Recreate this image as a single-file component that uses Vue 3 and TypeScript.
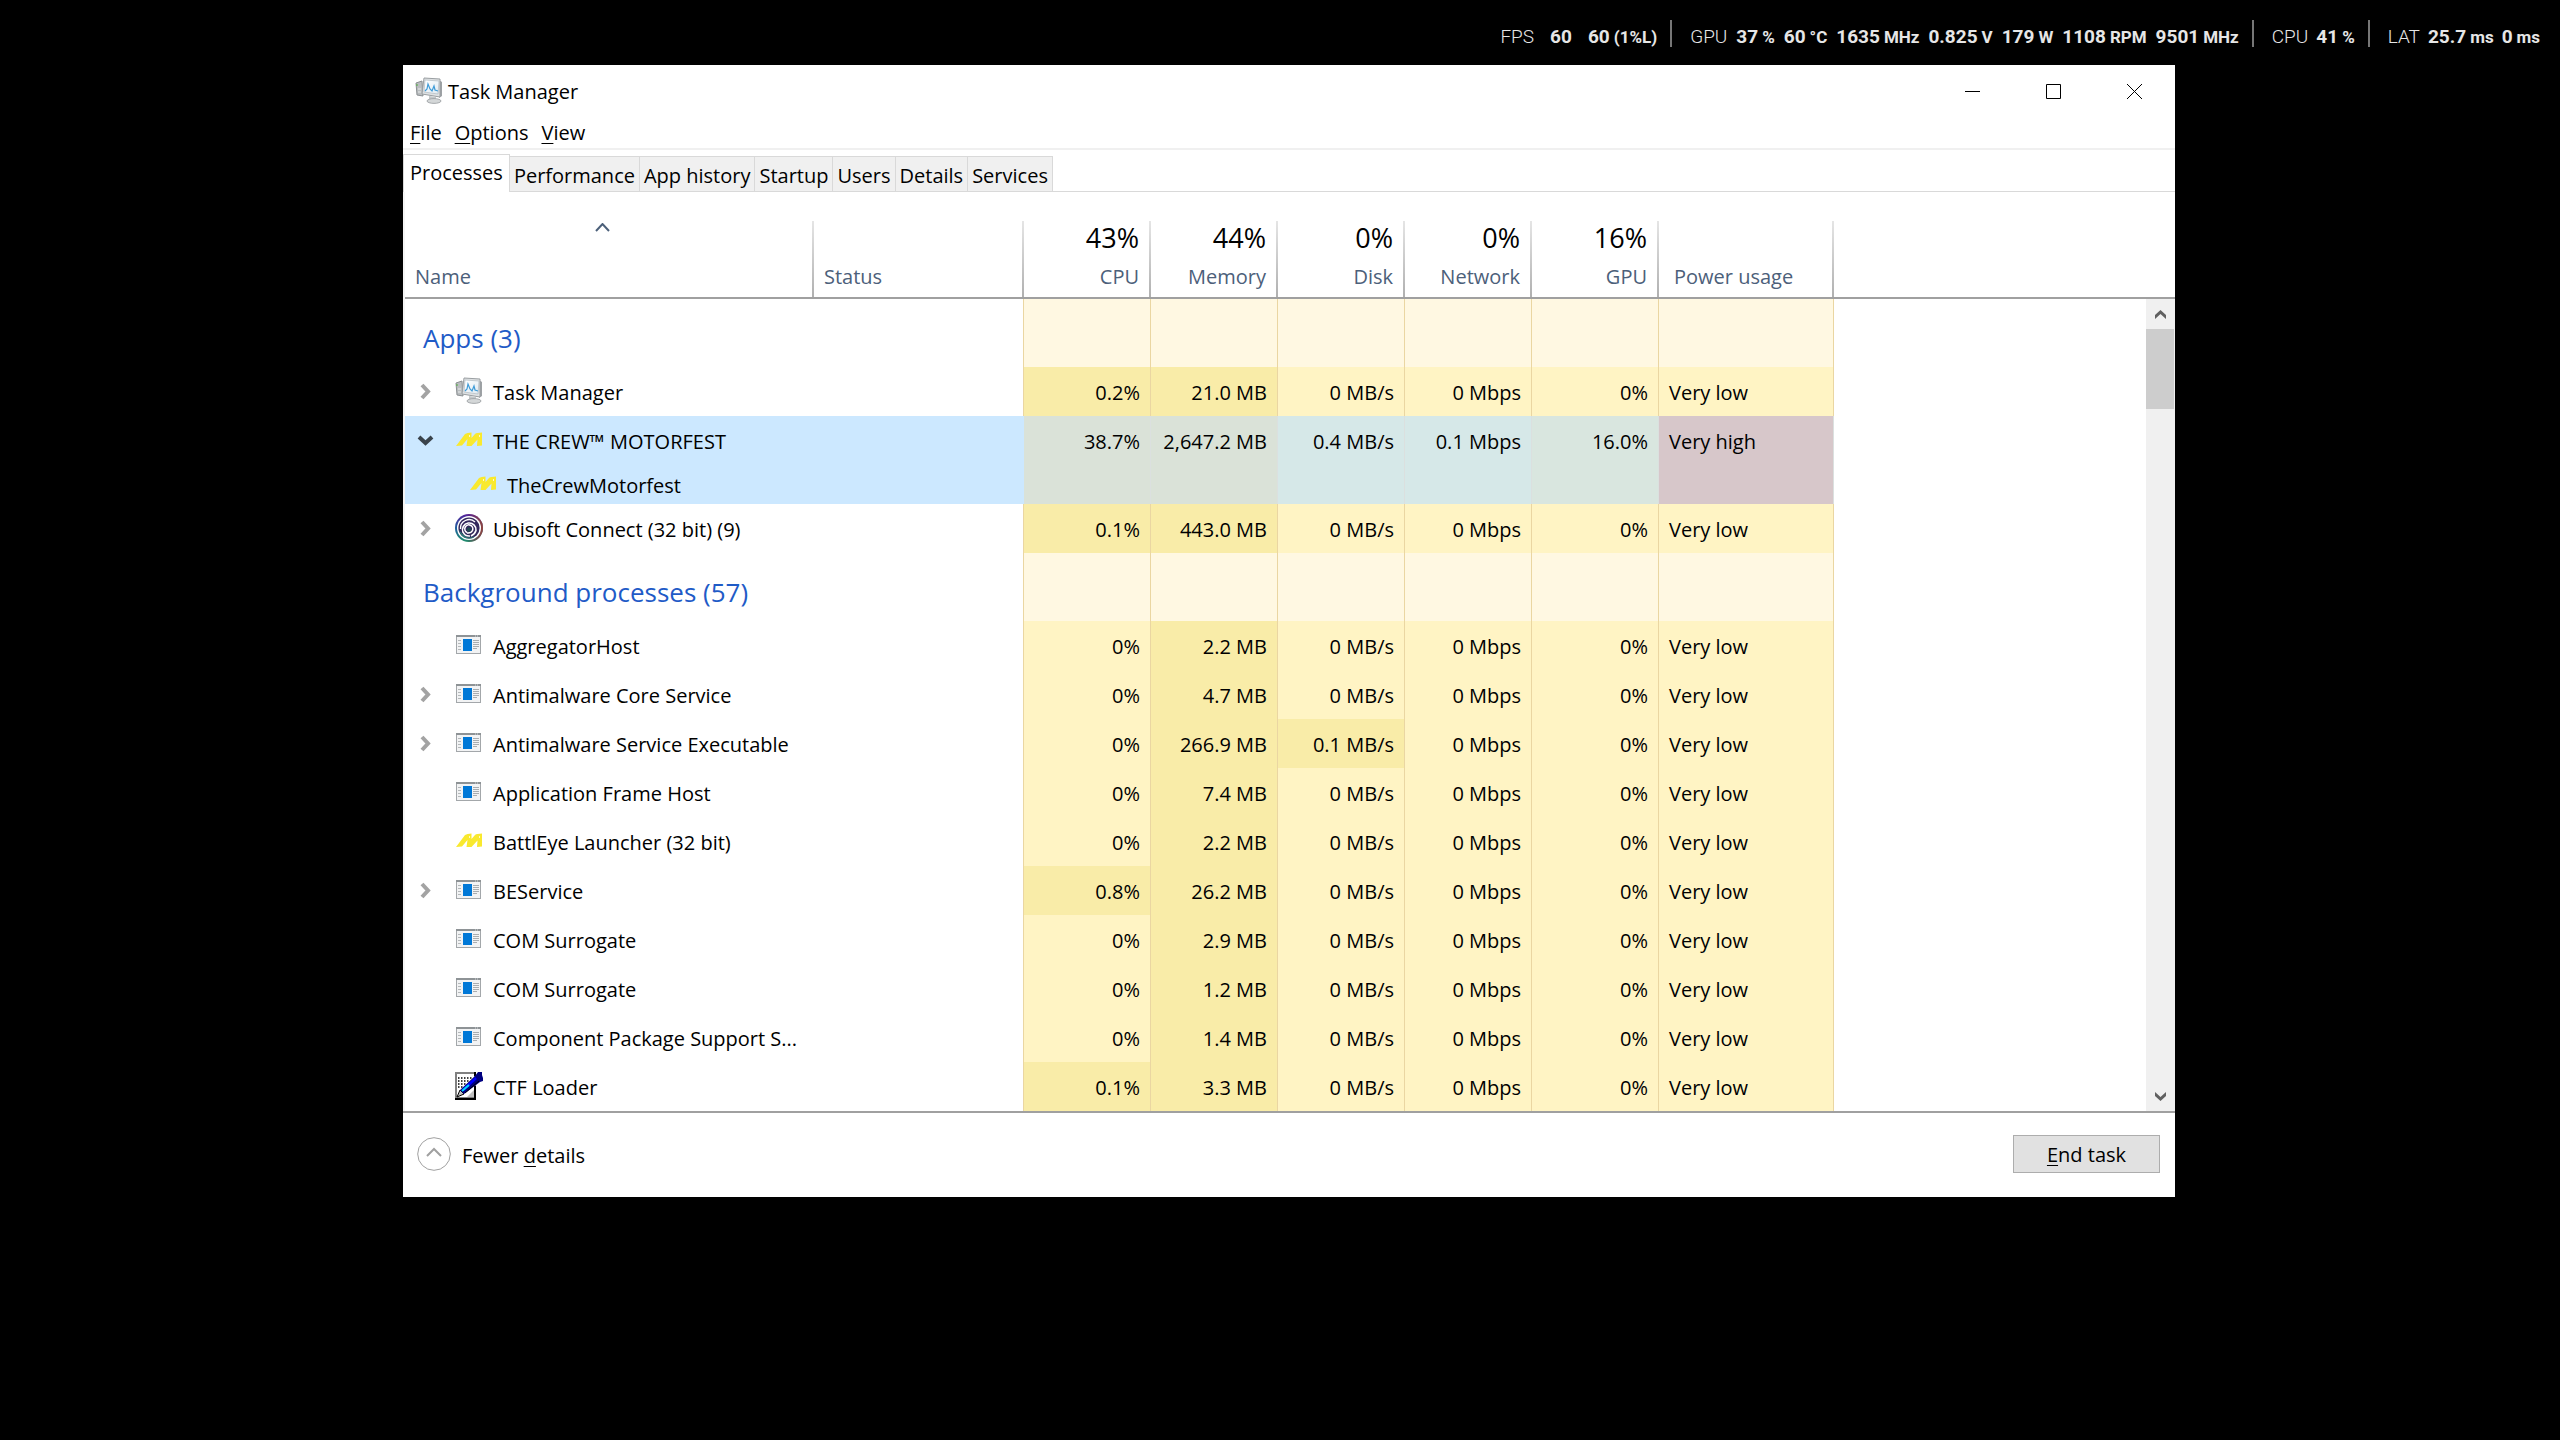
<script setup lang="ts">
type IconName = 'taskmgr' | 'crew' | 'ubisoft' | 'window' | 'ctf'
type Heat = 'low' | 'mid' | 'warm' | 'hot' | 'cool' | 'tint'

interface Cell {
  text: string
  heat: Heat
}

interface Row {
  name: string
  icon: IconName
  expand: 'closed' | 'open' | 'none'
  child?: boolean
  selected?: boolean
  cells: Cell[]
}

interface Group {
  title: string
  rows: Row[]
}

interface Metric {
  value: string
  unit?: string
}

const overlay: { label: string; metrics: Metric[] }[] = [
  { label: 'FPS', metrics: [{ value: '60' }, { value: '60', unit: '(1%L)' }] },
  {
    label: 'GPU',
    metrics: [
      { value: '37', unit: '%' },
      { value: '60', unit: '°C' },
      { value: '1635', unit: 'MHz' },
      { value: '0.825', unit: 'V' },
      { value: '179', unit: 'W' },
      { value: '1108', unit: 'RPM' },
      { value: '9501', unit: 'MHz' },
    ],
  },
  { label: 'CPU', metrics: [{ value: '41', unit: '%' }] },
  { label: 'LAT', metrics: [{ value: '25.7', unit: 'ms' }, { value: '0', unit: 'ms' }] },
]

const menus = [
  { key: 'F', rest: 'ile' },
  { key: 'O', rest: 'ptions' },
  { key: 'V', rest: 'iew' },
]

const tabs = ['Processes', 'Performance', 'App history', 'Startup', 'Users', 'Details', 'Services']

const metricColumns = [
  { total: '43%', label: 'CPU' },
  { total: '44%', label: 'Memory' },
  { total: '0%', label: 'Disk' },
  { total: '0%', label: 'Network' },
  { total: '16%', label: 'GPU' },
]

function usage(cpu: string, memory: string, disk = '0 MB/s'): Cell[] {
  return [
    { text: cpu, heat: cpu === '0%' ? 'low' : 'mid' },
    { text: memory, heat: 'mid' },
    { text: disk, heat: disk === '0 MB/s' ? 'low' : 'mid' },
    { text: '0 Mbps', heat: 'low' },
    { text: '0%', heat: 'low' },
    { text: 'Very low', heat: 'low' },
  ]
}

function activeUsage(values: string[]): Cell[] {
  const heats: Heat[] = ['warm', 'warm', 'cool', 'cool', 'tint', 'hot']
  return heats.map((heat, i) => ({ text: values[i] ?? '', heat }))
}

const groups: Group[] = [
  {
    title: 'Apps (3)',
    rows: [
      { name: 'Task Manager', icon: 'taskmgr', expand: 'closed', cells: usage('0.2%', '21.0 MB') },
      {
        name: 'THE CREW™ MOTORFEST',
        icon: 'crew',
        expand: 'open',
        selected: true,
        cells: activeUsage(['38.7%', '2,647.2 MB', '0.4 MB/s', '0.1 Mbps', '16.0%', 'Very high']),
      },
      {
        name: 'TheCrewMotorfest',
        icon: 'crew',
        expand: 'none',
        child: true,
        selected: true,
        cells: activeUsage([]),
      },
      { name: 'Ubisoft Connect (32 bit) (9)', icon: 'ubisoft', expand: 'closed', cells: usage('0.1%', '443.0 MB') },
    ],
  },
  {
    title: 'Background processes (57)',
    rows: [
      { name: 'AggregatorHost', icon: 'window', expand: 'none', cells: usage('0%', '2.2 MB') },
      { name: 'Antimalware Core Service', icon: 'window', expand: 'closed', cells: usage('0%', '4.7 MB') },
      {
        name: 'Antimalware Service Executable',
        icon: 'window',
        expand: 'closed',
        cells: usage('0%', '266.9 MB', '0.1 MB/s'),
      },
      { name: 'Application Frame Host', icon: 'window', expand: 'none', cells: usage('0%', '7.4 MB') },
      { name: 'BattlEye Launcher (32 bit)', icon: 'crew', expand: 'none', cells: usage('0%', '2.2 MB') },
      { name: 'BEService', icon: 'window', expand: 'closed', cells: usage('0.8%', '26.2 MB') },
      { name: 'COM Surrogate', icon: 'window', expand: 'none', cells: usage('0%', '2.9 MB') },
      { name: 'COM Surrogate', icon: 'window', expand: 'none', cells: usage('0%', '1.2 MB') },
      { name: 'Component Package Support S...', icon: 'window', expand: 'none', cells: usage('0%', '1.4 MB') },
      { name: 'CTF Loader', icon: 'ctf', expand: 'none', cells: usage('0.1%', '3.3 MB') },
    ],
  },
]
</script>

<template>
  <div class="desktop">
    <svg class="defs" aria-hidden="true">
      <defs>
        <linearGradient id="screen" x1="0" y1="0" x2="1" y2="1">
          <stop offset="0" stop-color="#ffffff" />
          <stop offset="1" stop-color="#dfeaf2" />
        </linearGradient>
        <linearGradient id="ubiBase" x1="0" y1="0" x2="0" y2="1">
          <stop offset="0" stop-color="#55209a" />
          <stop offset="0.5" stop-color="#1f5fa0" />
          <stop offset="1" stop-color="#1f8f6a" />
        </linearGradient>
        <linearGradient id="ubiWarm" x1="0" y1="0" x2="1" y2="0">
          <stop offset="0.4" stop-color="#8a2a4a" stop-opacity="0" />
          <stop offset="1" stop-color="#96443a" />
        </linearGradient>
        <symbol id="icon-taskmgr" viewBox="0 0 28 28">
          <path d="M1 6 L7 4 L8 19 L2 18 Z" fill="#b9bdbf" stroke="#8b8f92" stroke-width="1" />
          <path d="M2 7 L2 9" stroke="#4fae3a" stroke-width="1" />
          <path d="M3 12 L6 12 M3 15 L6 15" stroke="#e9ebec" stroke-width="1" />
          <path d="M24 3 L27 5 L27 19 L24 21 Z" fill="#9ea2a5" />
          <path d="M9 1 L25 2 L25 20 L7 17 Z" fill="#dfe2e4" stroke="#999ea1" stroke-width="1" />
          <path d="M10 3 L24 4 L23 17 L9 15 Z" fill="url(#screen)" stroke="#aab4bb" stroke-width="0.6" />
          <path d="M10 14 L12 12 L13 7 L15 12 L17 14 L19 9 L20 13 L23 14" fill="none" stroke="#3d9bd8" stroke-width="1.2" />
          <path d="M14 19 L21 20 L21 23 L14 23 Z" fill="#c3c7c9" />
          <ellipse cx="19" cy="24" rx="7" ry="2.4" fill="#d4d7d8" stroke="#979b9e" stroke-width="0.8" />
        </symbol>
        <symbol id="icon-crew" viewBox="0 0 28 28">
          <path
            d="M1 20 L10 8 Q12 6.5 16.5 6.5 L16.5 12 L20 8 Q21.5 6.5 27 6.5 L27 19.5 L22 20 L22.5 13.5 L16.5 20 L11.5 20 L12.5 13 L7 19.5 Z"
            fill="#f9e92e"
          />
          <path d="M14.5 9 V11 M24.5 9 V11" stroke="#fffbc4" stroke-width="1" />
        </symbol>
        <symbol id="icon-ubisoft" viewBox="0 0 28 28">
          <circle cx="14" cy="14" r="14" fill="url(#ubiBase)" />
          <circle cx="14" cy="14" r="14" fill="url(#ubiWarm)" />
          <circle cx="14" cy="14" r="12" fill="#ffffff" />
          <circle cx="14" cy="14" r="10.6" fill="#33285c" />
          <path d="M4 16 Q7 20 10 22 Q14 25 20 22 L18 24 Q13 26 8 23 Q5 20 4 16 Z" fill="#2a7a74" />
          <path d="M5.5 15 A8.6 8.6 0 0 1 20 8" fill="none" stroke="#ffffff" stroke-width="1.3" />
          <path d="M8 18.5 A6.8 6.8 0 1 1 21 16.5 Q20 20 16 22" fill="none" stroke="#ffffff" stroke-width="1.6" />
          <path d="M12 18.5 A4 4 0 1 1 17.5 16.5 Q16 19.5 12 19" fill="none" stroke="#ffffff" stroke-width="1.6" />
          <path d="M8 18 Q10 22.5 15 22" fill="none" stroke="#ffffff" stroke-width="1.6" />
          <circle cx="14" cy="15.5" r="2.2" fill="#22484f" />
        </symbol>
        <symbol id="icon-window" viewBox="0 0 28 28">
          <rect x="1.5" y="4.5" width="24" height="18" fill="#f2f3f4" stroke="#a3a7aa" />
          <rect x="1" y="4" width="25" height="2" fill="#8e9396" />
          <path d="M20 5 H24" stroke="#d5d8da" stroke-width="1" stroke-dasharray="1 1" />
          <path d="M3 9.5 H6 M3 12.5 H6 M3 15.5 H6 M3 18.5 H6" stroke="#b4b8ba" />
          <path d="M18 9.5 H24 M18 11.5 H24 M18 13.5 H24 M18 15.5 H24 M18 17.5 H22" stroke="#a9adb0" />
          <rect x="8" y="8" width="9" height="12" fill="#0078d7" />
        </symbol>
        <symbol id="icon-ctf" viewBox="0 0 28 28">
          <path d="M0 0 H21 V28 H0 Z" fill="#808080" />
          <path d="M2 2 H19 V25 H2 Z" fill="#ffffff" />
          <path d="M0 26 H21 V28 H0 Z M19 14 H21 V28 H19 Z M19 0 H21 V4 H19 Z" fill="#000000" />
          <path d="M12 25 L19 18 V25 Z" fill="#c0c0c0" />
          <path d="M3 6 H18 M3 9 H15 M3 12 H12 M3 15 H9" stroke="#000000" stroke-width="1.4" stroke-dasharray="1.5 1.5" />
          <path d="M2 25 L5 18 L9 22 Z" fill="#c0c0c0" stroke="#000000" stroke-width="1" />
          <path d="M5 18 L20 4 L23 0 H27 V3 L28 6 V9 L25 10 L9 22 Z" fill="#000080" />
          <path d="M8 18 L21 6" stroke="#0000ff" stroke-width="2.5" />
          <path d="M7 19 L14 13" stroke="#00d8ff" stroke-width="2" />
          <path d="M10 21 L24 9" stroke="#000000" stroke-width="1" />
        </symbol>
      </defs>
    </svg>

    <header class="overlay">
      <div v-for="group in overlay" :key="group.label" class="overlay-group" :class="group.label.toLowerCase()">
        <span class="overlay-label">{{ group.label }}</span>
        <span v-for="(metric, i) in group.metrics" :key="i" class="metric">
          <b>{{ metric.value }}</b>
          <small v-if="metric.unit">{{ metric.unit }}</small>
        </span>
      </div>
    </header>

    <main class="window">
      <div class="titlebar">
        <svg class="icon"><use href="#icon-taskmgr" /></svg>
        <h1>Task Manager</h1>
        <div class="controls">
          <button type="button" aria-label="Minimize">
            <svg width="15" height="15"><path d="M0 7.5 H15" /></svg>
          </button>
          <button type="button" aria-label="Maximize">
            <svg width="15" height="15"><path d="M0.5 0.5 H14.5 V14.5 H0.5 Z" /></svg>
          </button>
          <button type="button" aria-label="Close">
            <svg width="15" height="15"><path d="M0 0 L15 15 M15 0 L0 15" /></svg>
          </button>
        </div>
      </div>

      <nav class="menubar">
        <button v-for="menu in menus" :key="menu.key" type="button"><u>{{ menu.key }}</u>{{ menu.rest }}</button>
      </nav>

      <div class="tabs" role="tablist">
        <button
          v-for="(tab, i) in tabs"
          :key="tab"
          type="button"
          role="tab"
          :aria-selected="i === 0"
          :class="{ active: i === 0 }"
        >
          {{ tab }}
        </button>
      </div>

      <div class="list">
        <table>
          <colgroup>
            <col class="col-name" />
            <col class="col-status" />
            <col v-for="column in metricColumns" :key="column.label" class="col-metric" />
            <col class="col-power" />
            <col />
          </colgroup>
          <thead>
            <tr>
              <th class="col-head" scope="col" aria-sort="ascending">
                <svg class="sort" width="15" height="9"><path d="M1 8 L7.5 1 L14 8" /></svg>
                <span class="label">Name</span>
              </th>
              <th class="col-head" scope="col"><span class="label">Status</span></th>
              <th v-for="column in metricColumns" :key="column.label" class="col-head numeric" scope="col">
                <span class="total">{{ column.total }}</span>
                <span class="label">{{ column.label }}</span>
              </th>
              <th class="col-head power" scope="col"><span class="label">Power usage</span></th>
              <td class="rest"></td>
            </tr>
          </thead>
          <tbody v-for="group in groups" :key="group.title">
            <tr class="group">
              <th colspan="2" scope="rowgroup">{{ group.title }}</th>
              <td v-for="n in 6" :key="n" class="usage"></td>
              <td></td>
            </tr>
            <tr v-for="(row, r) in group.rows" :key="r" :class="{ selected: row.selected, child: row.child }">
              <td>
                <div class="name">
                  <span class="toggle">
                    <button v-if="row.expand === 'closed'" type="button" aria-label="Expand">
                      <svg width="11" height="17"><path d="M2 2 L8 8.5 L2 15" /></svg>
                    </button>
                    <button v-if="row.expand === 'open'" type="button" class="open" aria-label="Collapse">
                      <svg width="17" height="11"><path d="M2 2 L8.5 8 L15 2" /></svg>
                    </button>
                  </span>
                  <svg class="icon"><use :href="'#icon-' + row.icon" /></svg>
                  <span class="caption">{{ row.name }}</span>
                </div>
              </td>
              <td class="status"></td>
              <td v-for="(cell, c) in row.cells" :key="c" class="usage" :class="[cell.heat, { text: c === 5 }]">
                {{ cell.text }}
              </td>
              <td></td>
            </tr>
          </tbody>
        </table>
        <div class="scroll">
          <div class="scroll-head"></div>
          <div class="track">
            <button type="button" aria-label="Scroll up">
              <svg width="11" height="9"><path d="M0 9 V5 L5.5 0 L11 5 V9 L5.5 4 Z" /></svg>
            </button>
            <div class="thumb"></div>
            <button type="button" class="down" aria-label="Scroll down">
              <svg width="11" height="9"><path d="M0 0 V4 L5.5 9 L11 4 V0 L5.5 5 Z" /></svg>
            </button>
          </div>
        </div>
      </div>

      <footer class="footer">
        <button type="button" class="fewer">
          <svg width="34" height="34">
            <circle cx="17" cy="17" r="16.3" />
            <path d="M10 19 L17 12 L24 19" stroke-width="2" />
          </svg>
          <span class="caption">Fewer <u>d</u>etails</span>
        </button>
        <button type="button" class="end"><u>E</u>nd task</button>
      </footer>
    </main>
  </div>
</template>

<style>
html,
body {
  margin: 0;
  background: #000;
}
</style>

<style scoped>
.desktop {
  font: 20px/24px 'Open Sans', 'Noto Sans', sans-serif;
  color: #000;
}

.defs {
  position: absolute;
  width: 0;
  height: 0;
}

button {
  margin: 0;
  padding: 0;
  border: 0;
  background: none;
  color: inherit;
  font: inherit;
}

svg {
  display: block;
  flex: none;
}

u {
  text-decoration-thickness: 1px;
  text-underline-offset: 3px;
}

.icon {
  width: 28px;
  height: 28px;
}

.caption {
  padding-top: 3px;
}

/* performance overlay */
.overlay {
  display: flex;
  justify-content: flex-end;
  align-items: flex-start;
  height: 65px;
  padding: 20px 20px 0 0;
  box-sizing: border-box;
  font-family: Roboto, sans-serif;
  font-size: 19px;
  color: #e6e6e6;
}

.overlay-group {
  display: flex;
  align-items: baseline;
  gap: 8px;
  height: 27px;
  line-height: 34px;
}

.overlay-group + .overlay-group {
  margin-left: 13px;
  padding-left: 18px;
  border-left: 2px solid #767676;
}

.overlay-label {
  font-weight: 300;
}

.metric {
  display: flex;
  align-items: baseline;
  gap: 4px;
}

.metric small {
  font-size: 17px;
  font-weight: 700;
}

.overlay .gpu {
  gap: 9px;
}

.overlay .fps {
  gap: 16px;
}

/* window */
.window {
  margin: 0 385px 0 403px;
  background: #fff;
}

.titlebar {
  display: flex;
  align-items: center;
  height: 52px;
  padding-left: 12px;
}

.titlebar h1 {
  margin: 0 0 0 5px;
  padding-top: 1px;
  font-size: 20px;
  font-weight: 400;
}

.controls {
  display: flex;
  align-self: stretch;
  margin-left: auto;
}

.controls button {
  display: flex;
  align-items: center;
  justify-content: center;
  width: 81px;
}

.controls path {
  fill: none;
  stroke: #000;
}

.menubar {
  display: flex;
  height: 31px;
  border-bottom: 2px solid #f0f0f0;
}

.menubar button {
  padding: 1px 6px 0 7px;
}

.tabs {
  display: flex;
  align-items: flex-end;
  height: 42px;
  box-sizing: border-box;
  border-bottom: 1px solid #d9d9d9;
}

.tabs button {
  height: 35px;
  padding: 3px 4px 0;
  border: 1px solid #d9d9d9;
  border-width: 1px 1px 0 0;
  background: #f0f0f0;
}

.tabs .active {
  height: 38px;
  margin-bottom: -1px;
  padding: 0 6px 1px;
  border-left-width: 1px;
  background: #fff;
}

/* process list */
.list {
  display: flex;
  border-left: 2px solid #f4f4f4;
}

table {
  flex: 1;
  width: 0;
  table-layout: fixed;
  border-spacing: 0;
}

th,
td {
  padding: 0;
  font-weight: 400;
  text-align: left;
  white-space: nowrap;
}

.col-name {
  width: 409px;
}

.col-status {
  width: 210px;
}

.col-metric {
  width: 127px;
}

.col-power {
  width: 175px;
}

.col-head {
  height: 97px;
  padding: 0 12px 8px 10px;
  border-bottom: 2px solid #a0a0a0;
  background: linear-gradient(#e5e5e5, #b0b0b0) right bottom / 2px 76px no-repeat;
  color: #4c607a;
  vertical-align: bottom;
}

.col-head .label,
.col-head .total {
  display: block;
}

.numeric {
  text-align: right;
}

.total {
  margin-bottom: 11px;
  color: #000;
  font-size: 27px;
  line-height: 32px;
}

.power {
  padding-left: 15px;
}

.sort {
  margin: 0 0 33px 180px;
  fill: none;
  stroke: #4c607a;
  stroke-width: 2;
}

.rest {
  border-bottom: 2px solid #a0a0a0;
}

tbody td {
  box-sizing: border-box;
  height: 49px;
}

.child td {
  height: 39px;
}

.group th {
  height: 59px;
  padding: 9px 0 0 18px;
  border-right: 1px solid #ead6a2;
  color: #1f5bc7;
  font-size: 26px;
}

.status,
.usage {
  border-right: 1px solid #ead6a2;
}

.usage {
  padding: 2px 10px 0;
  background: #fff8e2;
  text-align: right;
}

.usage.text {
  text-align: left;
}

.low {
  background: #fff4c4;
}

.mid {
  background: #f9eca8;
}

.selected td {
  border-color: #dbe0df;
}

.selected td:nth-child(-n + 2) {
  border-color: #cce8ff;
  background: #cce8ff;
}

.warm {
  background: #dae2d8;
}

.cool {
  background: #d6e8e8;
}

.tint {
  background: #d9e6df;
}

.hot {
  background: #d7c7ca;
}

.name {
  display: flex;
  align-items: center;
  padding: 0 0 1px 15px;
}

.child .name {
  padding-left: 29px;
}

.toggle {
  width: 35px;
}

.toggle button {
  display: block;
}

.toggle path {
  fill: none;
  stroke: #a3a3a3;
  stroke-width: 4;
}

.toggle .open {
  margin-left: -3px;
}

.toggle .open path {
  stroke: #3a434b;
}

.name .icon {
  margin-right: 10px;
}

.scroll {
  display: flex;
  flex-direction: column;
  width: 29px;
}

.scroll-head {
  height: 105px;
  border-bottom: 2px solid #a0a0a0;
}

.track {
  display: flex;
  flex: 1;
  flex-direction: column;
  background: #f0f0f0;
}

.track button {
  display: flex;
  align-items: center;
  justify-content: center;
  height: 30px;
}

.track path {
  fill: #606060;
}

.thumb {
  height: 80px;
  margin-right: 1px;
  background: #cdcdcd;
}

.track .down {
  margin-top: auto;
}

/* footer */
.footer {
  display: flex;
  align-items: center;
  justify-content: space-between;
  padding: 22px 15px 24px 14px;
  border-top: 2px solid #a0a0a0;
}

.fewer {
  display: flex;
  align-items: center;
  gap: 11px;
}

.fewer path,
.fewer circle {
  fill: none;
  stroke: #a0a0a0;
}

.end {
  width: 147px;
  height: 38px;
  padding-top: 2px;
  border: 1px solid #adadad;
  background: #e1e1e1;
}
</style>
